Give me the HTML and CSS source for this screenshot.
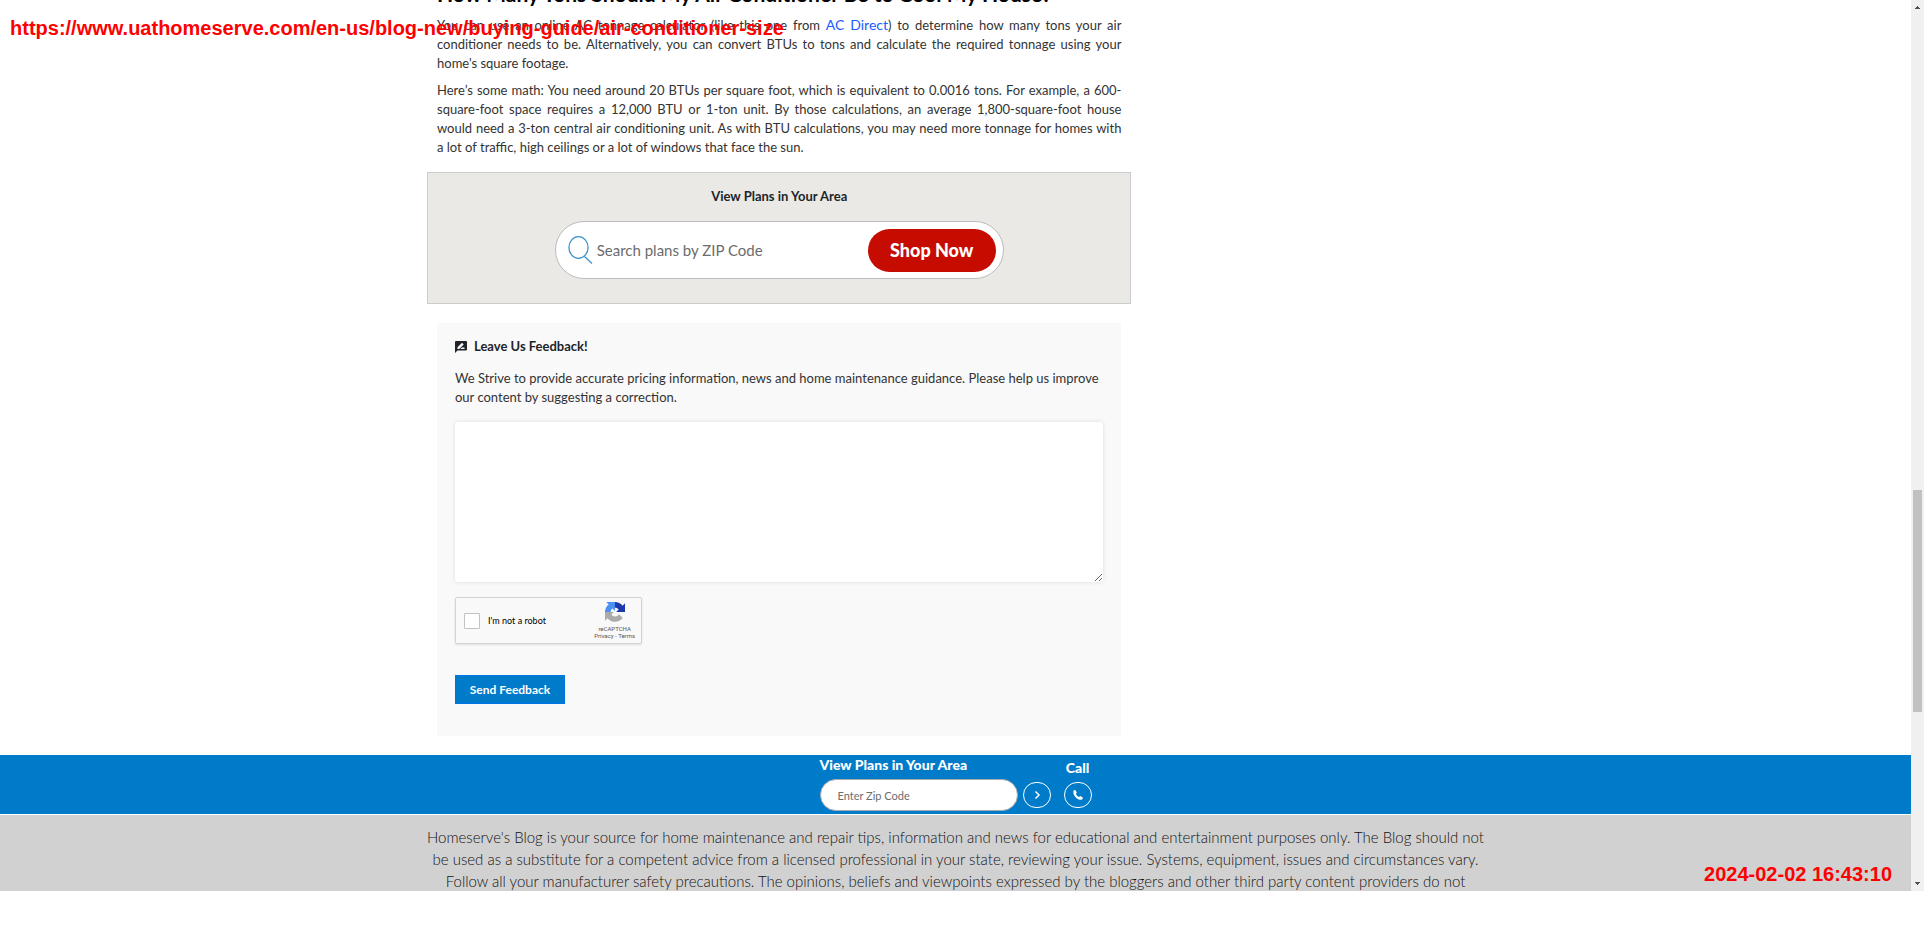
FILE: index.html
```html
<!DOCTYPE html>
<html lang="en-US">
<head>
<meta charset="utf-8">
<title>What Size Air Conditioner Do I Need?</title>
<link rel="stylesheet" href="styles.css">
</head>
<body>
<div class="screen">
  <div class="page">
    <main class="container">
      <article class="article">
        <h2 class="article-title">How Many Tons Should My Air Conditioner Be to Cool My House?</h2>
        <p class="copy"><span class="line">You can use an online AC tonnage calculator (like this one from <a class="link" href="#">AC Direct</a>) to determine how many tons your air</span> <span class="line">conditioner needs to be. Alternatively, you can convert BTUs to tons and calculate the required tonnage using your</span> <span class="line last">home's square footage.</span></p>
        <p class="copy"><span class="line">Here’s some math: You need around 20 BTUs per square foot, which is equivalent to 0.0016 tons. For example, a 600-</span> <span class="line">square-foot space requires a 12,000 BTU or 1-ton unit. By those calculations, an average 1,800-square-foot house</span> <span class="line">would need a 3-ton central air conditioning unit. As with BTU calculations, you may need more tonnage for homes with</span> <span class="line last">a lot of traffic, high ceilings or a lot of windows that face the sun.</span></p>

        <section class="plans">
          <h3 class="plans-title"><label for="zip">View Plans in Your Area</label></h3>
          <form class="search">
            <svg class="search-icon" viewBox="0 0 25 28" fill="none" stroke="#3d94cb" stroke-width="1.3" aria-hidden="true"><ellipse cx="10.5" cy="11.5" rx="9.6" ry="10.8"/><path d="M16.5 20.500L24 27.500"/></svg>
            <input class="search-input" id="zip" type="text" placeholder="Search plans by ZIP Code">
            <button class="shop" type="button">Shop Now</button>
          </form>
        </section>

        <section class="feedback">
          <h3 class="feedback-title">
            <svg class="feedback-icon" viewBox="0 0 12 12" aria-hidden="true"><path fill="#212529" d="M1 0h10a1 1 0 0 1 1 1v7.500a1 1 0 0 1-1 1H2.500L0 12V1a1 1 0 0 1 1-1z"/><path fill="#f9f9f9" d="M2.500 8V6.200L7 1.700l1.700 1.700L4.200 8zM5.500 8l1.400-1.400H9.500V8z"/></svg>
            <label for="message">Leave Us Feedback!</label>
          </h3>
          <p class="feedback-copy">We Strive to provide accurate pricing information, news and home maintenance guidance. Please help us improve<br>our content by suggesting a correction.</p>
          <textarea class="message" id="message"></textarea>
          <div class="captcha">
            <input class="captcha-box" id="robot" type="checkbox">
            <label class="captcha-label" for="robot">I'm not a robot</label>
            <div class="captcha-brand">
              <svg class="captcha-logo" viewBox="0 0 64 64" aria-hidden="true"><path fill="#1c3aa9" d="M64 32V4l-7.800 7.800A32 32 0 0 0 32 0v18c5 0 9 2 11.500 6l-8 8z"/><path fill="#4a90f5" d="M32 0H4l7.800 7.800A32 32 0 0 0 0 32h18c0-5 2-9 6-11.500l8 8z"/><path fill="#ababab" d="M0 32v28l7.800-7.800A32 32 0 0 0 57 51L45 39.500C37 50 25 47 20.500 40l8-8z"/></svg>
              <span class="captcha-name">reCAPTCHA</span>
              <span class="captcha-links"><a href="#">Privacy</a> - <a href="#">Terms</a></span>
            </div>
          </div>
          <button class="send" type="button">Send Feedback</button>
        </section>
      </article>
    </main>

    <section class="bar">
      <div class="bar-plans">
        <label class="bar-title" for="bar-zip">View Plans in Your Area</label>
        <div class="bar-row">
          <input class="bar-input" id="bar-zip" type="text" placeholder="Enter Zip Code">
          <button class="round" type="button" aria-label="Go"><svg class="round-icon" viewBox="0 0 10 10" fill="none" stroke="#fff" stroke-width="1.500" aria-hidden="true"><path d="M3.500 1.500L7 5 3.500 8.500"/></svg></button>
        </div>
      </div>
      <div class="bar-call">
        <span class="bar-title">Call</span>
        <a class="round" href="#" aria-label="Call us"><svg class="round-icon" viewBox="0 0 10 10" fill="#fff" aria-hidden="true"><path d="M.3 1.200C.8.500 1.800-.1 2.500.2L3.800 2.600 2.900 3.900C3.500 5.200 4.600 6.300 6 7l1.300-.9 2.500 1.400c.1 1-.5 1.900-1.400 2.300C4 9.700.2 5.800.3 1.200z"/></svg></a>
      </div>
    </section>

    <footer class="footer">
      <p class="footer-copy">Homeserve's Blog is your source for home maintenance and repair tips, information and news for educational and entertainment purposes only. The Blog should not<br>be used as a substitute for a competent advice from a licensed professional in your state, reviewing your issue. Systems, equipment, issues and circumstances vary.<br>Follow all your manufacturer safety precautions. The opinions, beliefs and viewpoints expressed by the bloggers and other third party content providers do not</p>
    </footer>
  </div>
  <div class="scroll" aria-hidden="true">
    <svg class="arrow" viewBox="0 0 5 3" fill="#505050"><path d="M2 0h1v1h1v1h1v1H0V2h1V1h1z"/></svg>
    <div class="track"><div class="thumb"></div></div>
    <svg class="arrow" viewBox="0 0 5 3" fill="#505050"><path d="M0 0h5v1H4v1H3v1H2V2H1V1H0z"/></svg>
  </div>
  <div class="stamp url">https://www.uathomeserve.com/en-us/blog-new/buying-guide/air-conditioner-size</div>
  <div class="stamp time">2024-02-02 16:43:10</div>
</div>
</body>
</html>
```
FILE: styles.css
```css
* { box-sizing: border-box; }
body { margin: 0; background: #fff; color: #333; font-family: Lato, "Open Sans", sans-serif; font-size: 13px; line-height: 19px; }
h2, h3, p { margin: 0; }
input, textarea, button { font-family: inherit; margin: 0; }
.screen { position: relative; display: flex; overflow: hidden; }
.page { flex: 1; min-width: 0; }
.container { width: min(1037px, 100%); margin: 0 auto; }
.article { width: 66%; }

.article-title { margin-top: -18px; margin-bottom: 10px; font-size: 21px; line-height: 24px; font-weight: 700; color: #000; white-space: nowrap; }
.copy { margin-bottom: 8px; }
.line { display: block; text-align: justify; text-align-last: justify; }
.line.last { text-align-last: left; }
.link { color: #1a5cff; font-size: 14px; line-height: 1; text-decoration: none; }

.plans { margin: 15px -10px 19px; padding: 14px 0 24px; background: #eae9e5; border: 1px solid #ccc; text-align: center; color: #212529; }
.plans-title { font-size: 13px; line-height: 19px; font-weight: 700; }
.search { display: flex; align-items: center; width: 449px; max-width: 100%; height: 58px; margin: 15px auto 0; padding: 0 7px 0 12px; background: #fff; border: 1px solid #bbb; border-radius: 29px; }
.search-icon { width: 25px; height: 28px; flex: none; }
.search-input { flex: 1; min-width: 0; padding: 0 4px; border: 0; outline: 0; background: none; font-size: 15px; }
.search-input::placeholder, .bar-input::placeholder { color: #6c6c6c; opacity: 1; }
.shop { width: 128px; height: 43px; border: 0; border-radius: 22px; background: #c60c00; color: #fff; font-size: 18px; font-weight: 900; }

.feedback { padding: 14px 18px 32px; background: #f9f9f9; }
.feedback-title { display: flex; align-items: center; gap: 7px; font-size: 13px; line-height: 19px; color: #212529; }
.feedback-icon { width: 12px; height: 12px; }
.feedback-copy { margin: 13px 0 15px; white-space: nowrap; }
.message { display: block; width: 100%; height: 160px; border: 0; border-radius: 3px; background: #fff; box-shadow: 0 0 4px #ddd; resize: vertical; }
.captcha { display: flex; align-items: center; width: 187px; height: 47px; margin: 15px 0 31px; padding: 0 6px 0 8px; background: #f9f9f9; border: 1px solid #d3d3d3; border-radius: 2px; box-shadow: 0 1px 2px #ddd; color: #000; }
.captcha-box { appearance: none; width: 16px; height: 16px; background: #fff; border: 1px solid #c1c1c1; border-radius: 1px; }
.captcha-label { flex: 1; padding-left: 8px; font-family: Lato, sans-serif; font-size: 9px; }
.captcha-brand { display: flex; flex-direction: column; align-items: center; color: #555; font-family: Roboto, sans-serif; font-size: 6px; line-height: 7px; }
.captcha-logo { width: 20px; height: 20px; margin-bottom: 3px; }
.captcha-links { font-size: 6px; }
.captcha-links a { color: inherit; text-decoration: none; }
.send { display: block; width: 110px; height: 29px; padding: 0; border: 1px solid #0073e6; background: #007bca; color: #fff; font-size: 12px; font-weight: 700; }

.bar { display: flex; justify-content: center; gap: 13px; margin-top: 19px; height: 59px; background: #007bca; color: #fff; }
.bar-title { display: block; font-size: 14px; line-height: 20px; font-weight: 900; white-space: nowrap; }
.bar-row { display: flex; align-items: center; gap: 5px; margin-top: 4px; }
.bar-input { width: 198px; height: 32px; padding: 0 17px; border: 1px solid #aaa; border-radius: 16px; outline: 0; background: #fff; font-size: 11px; }
.round { display: flex; align-items: center; justify-content: center; width: 28px; height: 26px; padding: 0; border: 1px solid #fff; border-radius: 14px; background: none; }
.round-icon { width: 10px; height: 10px; }
.bar-call { display: flex; flex-direction: column; align-items: center; gap: 4px; padding-top: 3px; }

.footer { max-height: 76px; margin-top: 1px; padding: 11px 0 0; overflow: hidden; background: #d1d1d1; text-align: center; }
.footer-copy { font-size: 15px; line-height: 22px; font-weight: 300; color: #111; white-space: nowrap; }

.scroll { display: flex; flex-direction: column; align-items: center; flex: none; width: 13px; padding: 6px 0; background: #f0f0f0; }
.arrow { width: 5px; height: 3px; }
.track { flex: 1; width: 9px; padding-top: 481px; }
.thumb { height: 222px; background: #c1c1c1; }

.stamp { position: absolute; font-family: "Liberation Sans", Arial, sans-serif; font-size: 20px; line-height: 24px; font-weight: 700; color: #f00; white-space: nowrap; }
.url { left: 10px; top: 16px; }
.time { right: 32px; bottom: 5px; }
```
